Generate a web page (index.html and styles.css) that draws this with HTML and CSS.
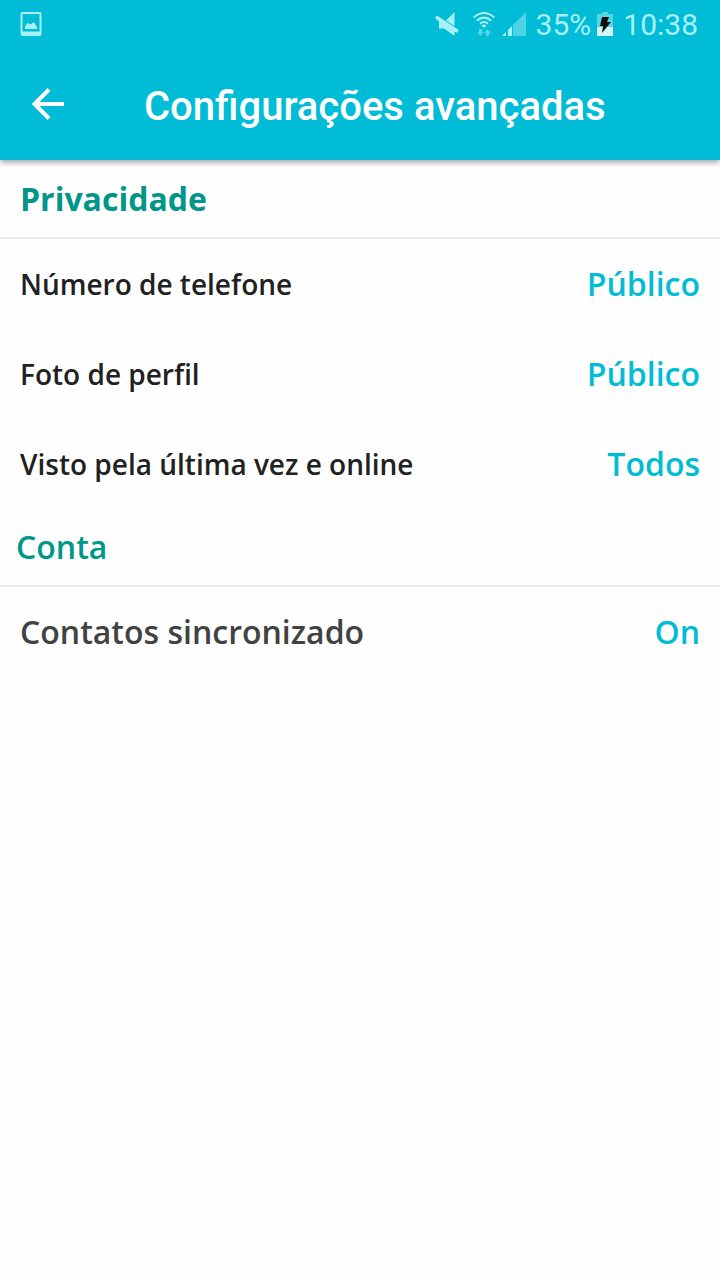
FILE: index.html
```html
<!DOCTYPE html>
<html lang="pt-BR">
<head>
<meta charset="utf-8">
<meta name="viewport" content="width=device-width, initial-scale=1">
<title>Configurações avançadas</title>
<link rel="stylesheet" href="styles.css">
</head>
<body>
<header class="top">
  <div class="status">
    <svg class="picture" width="22" height="24" viewBox="0 0 22 24" aria-hidden="true"><path fill="currentColor" fill-rule="evenodd" d="M2.500 0h17a2 2 0 0 1 2 2v20a2 2 0 0 1-2 2h-17a2 2 0 0 1-2-2V2a2 2 0 0 1 2-2zm0 2v17.500h17V2zM5 17v-2.500l1-1.500 2-2 3 1.500 2-2 2 .500 1 3 1 .500V17z"/></svg>
    <div class="indicators">
      <svg width="24" height="24" viewBox="0 0 24 24" aria-hidden="true"><path fill="currentColor" d="M19.500 0v14L11 8.500zM0 6l2-2.500 22 14.500-2 3-2.500-1.500V24L9 16.500H4V9.500z"/></svg>
      <svg class="wifi" width="22" height="24" viewBox="0 0 22 24" aria-hidden="true"><g fill="none" stroke="currentColor" stroke-width="2"><path d="M.700 5.500Q11-3.500 21.300 5.500M3.800 8.700Q11 2.500 18.200 8.700M7 11.700q4-3.500 8 0"/></g><path fill="currentColor" d="M8.500 13.500q2.500-2 5 0L11 16z"/><path fill="currentColor" opacity=".5" d="M6 17h3v3h2l-3.500 4L4 20h2zM13 24v-3h-2l3.500-4 3.500 4h-2v3z"/></svg>
      <svg class="signal" width="24" height="24" viewBox="0 0 24 24" aria-hidden="true"><path fill="currentColor" opacity=".45" d="M24 0v24H11V13z"/><path fill="currentColor" d="M0 24l4-4v4zM6 24v-6l4-4v10z"/></svg>
      <span class="level">35%</span>
      <svg class="battery" width="16" height="24" viewBox="0 0 16 24" aria-hidden="true"><path fill="currentColor" opacity=".5" d="M5 0h6v2h5v13H0V2h5z"/><path fill="#d4f6fa" d="M0 15h16v9H0z"/><path fill="#111" d="M5 5h7l-2 5h4L5 21l1-7H3z"/></svg>
      <time class="clock">10:38</time>
    </div>
  </div>
  <div class="toolbar">
    <button class="back" type="button" aria-label="Voltar"><svg width="32" height="32" viewBox="0 0 32 32" aria-hidden="true"><path d="M32 16H3M17 1.500L2.500 16 17 30.500" fill="none" stroke="currentColor" stroke-width="4"/></svg></button>
    <h1 class="title">Configurações avançadas</h1>
  </div>
</header>
<main>
  <section>
    <h2 class="heading">Privacidade</h2>
    <button class="row" type="button"><span>Número de telefone</span><span class="value">Público</span></button>
    <button class="row" type="button"><span>Foto de perfil</span><span class="value">Público</span></button>
    <button class="row" type="button"><span>Visto pela última vez e online</span><span class="value">Todos</span></button>
  </section>
  <section>
    <h2 class="heading heading-account">Conta</h2>
    <button class="row row-large" type="button"><span>Contatos sincronizado</span><span class="value">On</span></button>
  </section>
</main>
</body>
</html>
```
FILE: styles.css
```css
* { box-sizing: border-box; }
body {
  margin: 0;
  background: #fefefe;
  font-family: "Open Sans", "Noto Sans", sans-serif;
}
.top {
  background: #00bcd7;
  color: #fff;
  font-family: Roboto, sans-serif;
  box-shadow: 0 2px 6px rgba(0, 0, 0, .4);
}
.status {
  display: flex;
  justify-content: space-between;
  align-items: center;
  height: 48px;
  padding: 0 22px 0 20px;
  color: #a8f0f8;
  font-size: 30px;
  line-height: 48px;
}
.indicators { display: flex; align-items: center; }
.status svg { display: block; }
.wifi { margin-left: 14px; }
.signal { margin-left: 7px; }
.level { margin: 2px 6px 0 10px; }
.clock { margin: 2px 0 0 10px; }
.toolbar {
  display: flex;
  align-items: center;
  height: 112px;
  padding: 0 32px;
}
.back {
  display: flex;
  padding: 0;
  border: 0;
  background: none;
  color: inherit;
}
.title {
  margin: 6px 0 0 80px;
  font-size: 40px;
  line-height: 48px;
  font-weight: 500;
}
.heading {
  margin: 0;
  padding: 0 20px;
  border-bottom: 2px solid #ebebeb;
  color: #009688;
  font-size: 32px;
  line-height: 77px;
  font-weight: 700;
}
.heading-account {
  padding: 0 16px;
  line-height: 76px;
  font-weight: 600;
}
.row {
  display: flex;
  justify-content: space-between;
  align-items: center;
  width: 100%;
  height: 90px;
  padding: 0 20px;
  border: 0;
  background: none;
  color: #212121;
  font: 600 28px/44px "Open Sans", "Noto Sans", sans-serif;
}
.value { color: #00bcd4; font-size: 32px; }
.row-large { color: #424242; font-size: 32px; }
```
